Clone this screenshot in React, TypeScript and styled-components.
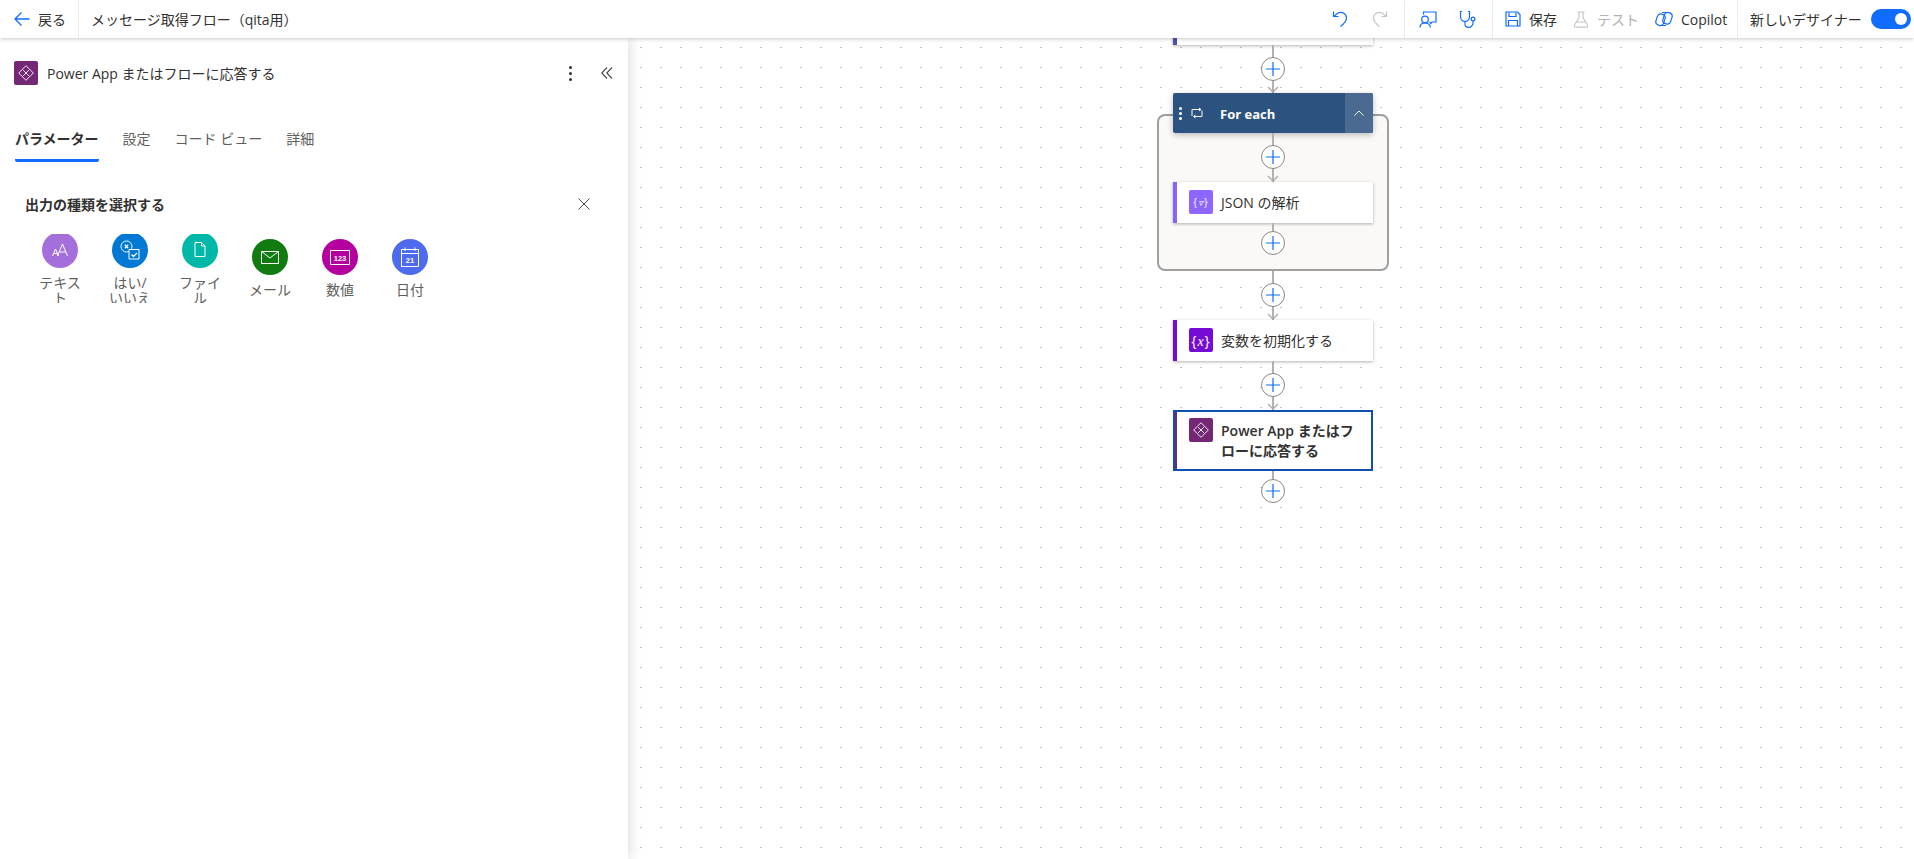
import React from 'react';
import styled, { createGlobalStyle } from 'styled-components';

const FONT = `"Open Sans", "Noto Sans CJK JP", sans-serif`;
const BLUE = '#0f6cff';

const GlobalStyle = createGlobalStyle`
	html, body {
		margin: 0;
		padding: 0;
		height: 100%;
		overflow: hidden;
		background: #fff;
		font-family: ${FONT};
		color: #323130;
	}
	* {
		box-sizing: border-box;
	}
`;

const Back = () => (
	<svg width="16" height="16" viewBox="0 0 16 16" fill="none" stroke={BLUE} strokeWidth="1.3">
		<path d="M15.500 8H1M7.500 1.500 1 8l6.500 6.500" />
	</svg>
);

const Undo = () => (
	<svg width="16" height="18" viewBox="0 0 16 18" fill="none" stroke={BLUE} strokeWidth="1.2">
		<path d="M1.500 1.500v5h5M1.500 6.500 6 3c4-2 8.500 1 8.500 5 0 3-1.500 5-6 8.500" />
	</svg>
);

const Redo = () => (
	<svg width="16" height="18" viewBox="0 0 16 18" fill="none" stroke="#c8c6c4" strokeWidth="1.2">
		<path d="M14.500 1.500v5h-5M14.500 6.500 10 3C6 1 1.500 4 1.500 8c0 3 1.500 5 6 8.500" />
	</svg>
);

const Review = () => (
	<svg width="18" height="18" viewBox="0 0 18 18" fill="none" stroke={BLUE} strokeWidth="1.2">
		<path d="M4.500 4.500V2H17v10h-4l-1 1.500-1.500-1.500" />
		<circle cx="6" cy="9.500" r="3.300" />
		<path d="M1 17.500c0-3 2-4.500 5-4.500s5 1.500 5.500 4.500" />
	</svg>
);

const Stethoscope = () => (
	<svg width="18" height="18" viewBox="0 0 18 18" fill="none" stroke={BLUE} strokeWidth="1.2">
		<path d="M3 1.500H1.500v5c0 3 2 5 4.500 5s4.500-2 4.500-5v-5H9" />
		<path d="M6 11.500V14c0 2 1.500 3.300 3.500 3.300s4.500-1.500 4.500-4.300v-2" />
		<circle cx="14" cy="9" r="1.900" />
	</svg>
);

const Save = () => (
	<svg width="16" height="16" viewBox="0 0 16 16" fill="none" stroke={BLUE} strokeWidth="1.2">
		<path d="M1 1h11.500L15 3.500V15H1z" />
		<path d="M4 1.500V5.500h7V1.500M3.500 15V9.500h9V15" />
	</svg>
);

const Flask = () => (
	<svg width="16" height="17" viewBox="0 0 16 17" fill="none" stroke="#c8c6c4" strokeWidth="1.2">
		<path d="M4.500 1h7M6 1v5.500L1.500 14c-.6 1.200 0 2.200 1.200 2.200h10.600c1.200 0 1.800-1 1.200-2.200L10 6.500V1M4 11h8" />
	</svg>
);

const CopilotIcon = () => (
	<svg width="18" height="16" viewBox="0 0 18 16" fill="none" stroke={BLUE} strokeWidth="1.2">
		<rect x="1.500" y="3" width="8" height="11.500" rx="3.500" transform="rotate(18 5.500 8.750)" />
		<rect x="8.500" y="1.500" width="8" height="11.500" rx="3.500" transform="rotate(18 12.500 7.250)" />
		<path d="M7 1.500h5M6 14.500h5" />
	</svg>
);

const PowerAppsGlyph = ({ size }: { size: number }) => (
	<svg width={size} height={size} viewBox="0 0 16 16" fill="none" stroke="#fff" strokeWidth="0.8">
		<path d="M8 1.500 14.500 8 8 14.500 1.500 8z" strokeLinejoin="round" />
		<path d="M5.500 5.500 10.500 10.500M10.500 5.500 5.500 10.500" />
	</svg>
);

const ForEachGlyph = () => (
	<svg width="14" height="12" viewBox="0 0 14 12" fill="none" stroke="#fff" strokeWidth="1">
		<path d="M2 9V2.500h8.500M12 3.500v6H4" />
		<path d="M9 1l2 1.500L9 4M5.500 8 3.500 9.500 5.500 11" />
	</svg>
);

const Chevron = () => (
	<svg width="10" height="6" viewBox="0 0 10 6" fill="none" stroke="#fff" strokeWidth="1">
		<path d="M.5 5.500 5 1l4.500 4.500" />
	</svg>
);

const DoubleChevron = () => (
	<svg width="12" height="12" viewBox="0 0 12 12" fill="none" stroke="#484644" strokeWidth="1.100">
		<path d="M6 .5.800 6 6 11.500M11 .5 5.800 6 11 11.500" />
	</svg>
);

const Close = () => (
	<svg width="12" height="12" viewBox="0 0 12 12" fill="none" stroke="#323130" strokeWidth="0.9">
		<path d="M.5.500l11 11M11.500.500l-11 11" />
	</svg>
);

const TextGlyph = () => (
	<svg width="16" height="14" viewBox="0 0 16 14" fill="none" stroke="#fff" strokeWidth="1">
		<path d="M.5 13 3.500 6l3 7M1.500 10.500h4M5.500 13 10.500 1l5 12M7.500 9h6" />
	</svg>
);

const YesNoGlyph = () => (
	<svg width="20" height="20" viewBox="0 0 20 20" fill="none" stroke="#fff" strokeWidth="1">
		<circle cx="6.500" cy="6.500" r="5.500" />
		<path d="M4.800 4.800 8.200 8.200M8.200 4.800 4.800 8.200" strokeWidth="1.300" />
		<path d="M9 9.500h10v9.500H9z" fill="#0078d4" />
		<path d="M11.500 14.500l2 2 3.500-3.500" strokeWidth="1.300" />
	</svg>
);

const FileGlyph = () => (
	<svg width="12" height="15" viewBox="0 0 12 15" fill="none" stroke="#fff" strokeWidth="1">
		<path d="M1 .5h6.500L11 4v10.500H1zM7.500.5V4H11" />
	</svg>
);

const MailGlyph = () => (
	<svg width="18" height="13" viewBox="0 0 18 13" fill="none" stroke="#fff" strokeWidth="1">
		<path d="M.5.500h17v12H.5zM.5.500 9 7l8.500-6.500" />
	</svg>
);

const NumberGlyph = () => (
	<svg width="20" height="15" viewBox="0 0 20 15" fill="none">
		<path d="M.5.500h19v14H.5z" stroke="#fff" />
		<text x="10" y="10.500" textAnchor="middle" fill="#fff" fontSize="7.500" fontWeight="700" fontFamily="Liberation Sans">
			123
		</text>
	</svg>
);

const DateGlyph = () => (
	<svg width="18" height="20" viewBox="0 0 18 20" fill="none">
		<path d="M.5 2.500h17v17H.5zM.5 6.500h17M4 .5v3.500M14 .5v3.500" stroke="#fff" />
		<text x="9" y="16" textAnchor="middle" fill="#fff" fontSize="7.500" fontWeight="700" fontFamily="Liberation Sans">
			21
		</text>
	</svg>
);

const outputTypes = [
	{ label: 'テキスト', color: '#a46fdb', icon: <TextGlyph /> },
	{ label: 'はい/いいえ', color: '#0078d4', icon: <YesNoGlyph /> },
	{ label: 'ファイル', color: '#00b7a8', icon: <FileGlyph /> },
	{ label: 'メール', color: '#107c10', icon: <MailGlyph /> },
	{ label: '数値', color: '#b4009e', icon: <NumberGlyph /> },
	{ label: '日付', color: '#4f6bed', icon: <DateGlyph /> },
];

const Edge = ({ $h, last }: { $h: number; last?: boolean }) => (
	<EdgeWrap $h={$h}>
		<PlusButton $top={last ? 8 : Math.floor(($h - 24) / 2)}>
			<svg width="14" height="14" viewBox="0 0 14 14" stroke={BLUE} strokeWidth="1.200">
				<path d="M0 7h14M7 0v14" />
			</svg>
		</PlusButton>
		{!last && (
			<Arrow width="12" height="7" viewBox="0 0 12 7" fill="none" stroke="#b3b0ad" strokeWidth="1.500">
				<path d="M1 1l5 5 5-5" />
			</Arrow>
		)}
	</EdgeWrap>
);

const App = () => {
	return (
		<Page>
			<GlobalStyle />
			<Toolbar>
				<BackButton>
					<Back />
					<span>戻る</span>
				</BackButton>
				<FlowName>メッセージ取得フロー（qita用）</FlowName>
				<Spacer />
				<ToolGroup $width={100}>
					<IconSlot>
						<Undo />
					</IconSlot>
					<IconSlot>
						<Redo />
					</IconSlot>
				</ToolGroup>
				<ToolGroup $width={88}>
					<IconSlot>
						<Review />
					</IconSlot>
					<IconSlot>
						<Stethoscope />
					</IconSlot>
				</ToolGroup>
				<ActionGroup>
					<Action>
						<Save />
						<span>保存</span>
					</Action>
					<Action $disabled>
						<Flask />
						<span>テスト</span>
					</Action>
					<Action>
						<CopilotIcon />
						<span>Copilot</span>
					</Action>
				</ActionGroup>
				<DesignerGroup>
					<span>新しいデザイナー</span>
					<Toggle />
				</DesignerGroup>
			</Toolbar>
			<Main>
				<Panel>
					<PanelHeader>
						<LogoTile>
							<PowerAppsGlyph size={18} />
						</LogoTile>
						<PanelTitle>Power App またはフローに応答する</PanelTitle>
						<Kebab>
							<i />
							<i />
							<i />
						</Kebab>
						<DoubleChevron />
					</PanelHeader>
					<Tabs>
						<Tab $active>パラメーター</Tab>
						<Tab>設定</Tab>
						<Tab>コード ビュー</Tab>
						<Tab>詳細</Tab>
					</Tabs>
					<SectionHeader>
						<SectionTitle>出力の種類を選択する</SectionTitle>
						<Close />
					</SectionHeader>
					<TypeGrid>
						{outputTypes.map((t) => (
							<TypeTile key={t.label}>
								<TypeCircle color={t.color}>{t.icon}</TypeCircle>
								<TypeLabel>{t.label}</TypeLabel>
							</TypeTile>
						))}
					</TypeGrid>
				</Panel>
				<Canvas>
					<Flow>
						<ClippedCard />
						<Edge $h={48} />
						<ScopeWrap>
							<ScopeBox />
							<ScopeHeader>
								<Grip>
									<i />
									<i />
									<i />
								</Grip>
								<ForEachGlyph />
								<ScopeTitle>For each</ScopeTitle>
								<CollapseButton>
									<Chevron />
								</CollapseButton>
							</ScopeHeader>
							<Edge $h={49} />
							<Card $accent="#8764ff">
								<LogoTile color="#8c66ff">
									<Braces $size={10}>
										{'{'}
										<em>▿</em>
										{'}'}
									</Braces>
								</LogoTile>
								<CardTitle>JSON の解析</CardTitle>
							</Card>
							<ScopeTail>
								<Edge $h={32} last />
							</ScopeTail>
						</ScopeWrap>
						<Edge $h={49} />
						<Card $accent="#770bd6">
							<LogoTile color="#770bd6">
								<Braces $size={14}>
									{'{'}
									<em>x</em>
									{'}'}
								</Braces>
							</LogoTile>
							<CardTitle>変数を初期化する</CardTitle>
						</Card>
						<Edge $h={49} />
						<Card $accent="#742774" $selected>
							<LogoTile>
								<PowerAppsGlyph size={18} />
							</LogoTile>
							<CardTitle $medium>Power App またはフローに応答する</CardTitle>
						</Card>
						<Edge $h={32} last />
					</Flow>
				</Canvas>
			</Main>
		</Page>
	);
};

const Page = styled('div')({
	width: '1914px',
	height: '859px',
	display: 'flex',
	flexDirection: 'column',
	overflow: 'hidden',
});

const Toolbar = styled('header')`
	position: relative;
	z-index: 3;
	height: 38px;
	flex: none;
	display: flex;
	align-items: center;
	background: #fff;
	box-shadow: 0 1px 4px rgba(0, 0, 0, 0.22);
	font-size: 14px;
`;

const BackButton = styled('div')`
	width: 79px;
	height: 100%;
	display: flex;
	align-items: center;
	gap: 8px;
	padding-left: 14px;
	border-right: 1px solid #edebe9;
`;

const FlowName = styled('div')`
	margin-left: 12px;
	font-size: 14px;
`;

const Spacer = styled('div')`
	flex: 1;
`;

const ToolGroup = styled('div')<{ $width: number }>`
	width: ${(p) => p.$width}px;
	height: 100%;
	display: flex;
	align-items: center;
	justify-content: flex-end;
	padding-right: 4px;
	border-right: 1px solid #edebe9;
`;

const IconSlot = styled('span')`
	display: flex;
	flex: none;
	width: 40px;
	justify-content: center;
`;

const ActionGroup = styled('div')`
	width: 245px;
	height: 100%;
	display: flex;
	align-items: center;
	gap: 16px;
	padding-left: 12px;
	border-right: 1px solid #edebe9;
`;

const Action = styled('div')<{ $disabled?: boolean }>`
	display: flex;
	align-items: center;
	gap: 8px;
	font-size: 14px;
	color: ${(p) => (p.$disabled ? '#b3b0ad' : '#323130')};
`;

const DesignerGroup = styled('div')`
	display: flex;
	align-items: center;
	gap: 9px;
	padding-left: 12px;
	width: 176px;
	font-size: 14px;
`;

const Toggle = styled('span')`
	position: relative;
	width: 40px;
	height: 20px;
	flex: none;
	border-radius: 10px;
	background: ${BLUE};

	&::after {
		content: '';
		position: absolute;
		right: 4px;
		top: 4px;
		width: 12px;
		height: 12px;
		border-radius: 50%;
		background: #fff;
	}
`;

const Main = styled('div')`
	flex: 1;
	display: flex;
	min-height: 0;
`;

const Panel = styled('aside')`
	position: relative;
	z-index: 2;
	width: 628px;
	flex: none;
	background: #fff;
	box-shadow: 0 0 14px rgba(0, 0, 0, 0.18);
`;

const PanelHeader = styled('div')`
	display: flex;
	align-items: center;
	height: 24px;
	margin: 23px 15px 0 14px;
`;

const LogoTile = styled('span')<{ color?: string }>`
	width: 24px;
	height: 24px;
	flex: none;
	display: flex;
	align-items: center;
	justify-content: center;
	border-radius: 2px;
	background: ${(p) => p.color || '#742774'};
	color: #fff;
`;

const PanelTitle = styled('div')`
	flex: 1;
	margin-left: 9px;
	font-size: 14px;
	font-weight: 400;
`;

const Kebab = styled('span')`
	display: flex;
	flex-direction: column;
	gap: 3px;
	margin-right: 29px;

	i {
		display: block;
		width: 3px;
		height: 3px;
		border-radius: 50%;
		background: #323130;
	}
`;

const Tabs = styled('nav')`
	display: flex;
	gap: 24px;
	margin: 37px 0 0 15px;
`;

const Tab = styled('div')<{ $active?: boolean }>`
	height: 40px;
	padding-top: 7px;
	font-size: 14px;
	line-height: 20px;
	font-weight: ${(p) => (p.$active ? 700 : 400)};
	color: ${(p) => (p.$active ? '#323130' : '#605e5c')};
	border-bottom: 3px solid ${(p) => (p.$active ? BLUE : 'transparent')};
	border-radius: 0 0 2px 2px;
`;

const SectionHeader = styled('div')`
	display: flex;
	align-items: center;
	justify-content: space-between;
	height: 20px;
	margin: 32px 38px 0 25px;
`;

const SectionTitle = styled('div')`
	font-size: 14px;
	font-weight: 600;
`;

const TypeGrid = styled('div')`
	display: flex;
	margin: 20px 0 0 25px;
`;

const TypeTile = styled('div')`
	width: 70px;
	height: 69px;
	display: flex;
	flex-direction: column;
	align-items: center;
	justify-content: center;
	overflow: hidden;
`;

const TypeCircle = styled('span')<{ color: string }>`
	width: 36px;
	height: 36px;
	flex: none;
	display: flex;
	align-items: center;
	justify-content: center;
	border-radius: 50%;
	background: ${(p) => p.color};
`;

const TypeLabel = styled('span')`
	width: 46px;
	margin: 7px 0 1px;
	flex: none;
	font-size: 14px;
	line-height: 15px;
	text-align: center;
	color: #605e5c;
	word-break: break-all;
`;

const Canvas = styled('main')`
	flex: 1;
	position: relative;
	overflow: hidden;
	background-color: #fff;
	background-image: conic-gradient(from 270deg at 2px 1px, #c4c2c0 25%, transparent 0);
	background-size: 20px 20px;
	background-position: 12px 9px;
`;

const Flow = styled('div')`
	width: 200px;
	margin: -33px 0 0 545px;
	display: flex;
	flex-direction: column;
`;

const ClippedCard = styled('div')`
	height: 40px;
	background: #fff;
	border-left: 4px solid #4f52b2;
	box-shadow: 0 1px 3px rgba(0, 0, 0, 0.3);
`;

const EdgeWrap = styled('div')<{ $h: number }>`
	position: relative;
	height: ${(p) => p.$h}px;
	flex: none;

	&::before {
		content: '';
		position: absolute;
		left: 99px;
		top: 0;
		bottom: 0;
		width: 2px;
		background: #b3b0ad;
	}
`;

const PlusButton = styled('span')<{ $top: number }>`
	position: absolute;
	left: 88px;
	top: ${(p) => p.$top}px;
	width: 24px;
	height: 24px;
	display: flex;
	align-items: center;
	justify-content: center;
	border: 1px solid #8a8886;
	border-radius: 50%;
	background: #fff;
`;

const Arrow = styled('svg')`
	position: absolute;
	left: 94px;
	bottom: 0;
`;

const ScopeWrap = styled('div')`
	position: relative;
	display: flex;
	flex-direction: column;
`;

const ScopeBox = styled('div')`
	position: absolute;
	left: -16px;
	right: -16px;
	top: 21px;
	bottom: 0;
	border: 2px solid #a19f9d;
	border-radius: 8px;
	background: #faf9f8;
`;

const ScopeHeader = styled('div')`
	position: relative;
	height: 40px;
	display: flex;
	align-items: center;
	padding-left: 6px;
	background: #2c5380;
	border-radius: 2px;
	color: #fff;
	box-shadow: 0 2px 6px rgba(0, 0, 0, 0.25);
`;

const Grip = styled('span')`
	display: flex;
	flex-direction: column;
	gap: 2px;
	margin-right: 8px;

	i {
		display: block;
		width: 3px;
		height: 3px;
		border-radius: 50%;
		background: #fff;
	}
`;

const ScopeTitle = styled('span')`
	flex: 1;
	margin-left: 16px;
	padding-top: 2px;
	font-size: 13px;
	font-weight: 700;
`;

const CollapseButton = styled('span')`
	width: 28px;
	height: 100%;
	display: flex;
	align-items: center;
	justify-content: center;
	background: #4a6a91;
	border-radius: 0 2px 2px 0;
`;

const Card = styled('div')<{ $accent: string; $selected?: boolean }>`
	position: relative;
	display: flex;
	align-items: flex-start;
	gap: 8px;
	padding: 8px 10px ${(p) => (p.$selected ? 10 : 9)}px 12px;
	background: #fff;
	border-left: 4px solid ${(p) => p.$accent};
	box-shadow: ${(p) => (p.$selected ? 'none' : '0 1px 3px rgba(0, 0, 0, 0.3)')};
	outline: ${(p) => (p.$selected ? '2px solid #0f4fb0' : 'none')};
	outline-offset: -2px;
`;

const CardTitle = styled('div')<{ $medium?: boolean }>`
	flex: 1;
	padding-top: 3px;
	font-size: 14px;
	line-height: 20px;
	font-weight: ${(p) => (p.$medium ? 600 : 400)};
	word-break: break-all;
`;

const ScopeTail = styled('div')`
	position: relative;
	height: 48px;
`;

const Braces = styled('span')<{ $size: number }>`
	font-family: "Open Sans", sans-serif;
	font-size: ${(p) => p.$size}px;
	letter-spacing: 1px;
	color: #fff;
	white-space: nowrap;

	em {
		font-family: "Liberation Serif", serif;
		font-style: italic;
	}
`;

export default App;
